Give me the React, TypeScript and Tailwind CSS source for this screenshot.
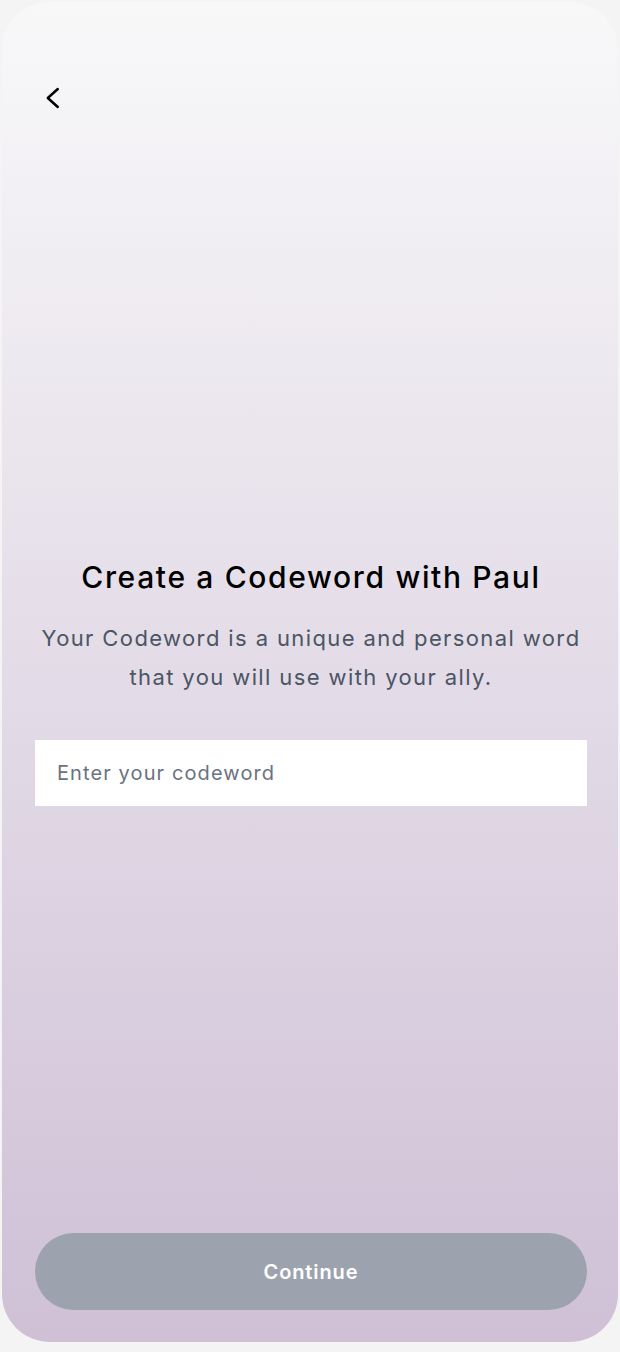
import React from "react";

export default function App() {
  return (
    <div className="min-h-[1352px] w-[620px] bg-[#f4f4f5] p-[2px]" style={{ fontFamily: "Inter, 'Noto Sans', sans-serif" }}>
      <div className="flex h-[1340px] w-[616px] flex-col rounded-[48px] bg-gradient-to-b from-[#f8f8f9] to-[#cfc0d6] pl-[33px] pr-[31px]">
        <div className="pt-[82px]">
          <button className="flex h-[28px] w-[28px] items-center justify-start">
            <svg width="20" height="26" viewBox="0 0 20 26" fill="none" className="ml-[9px]">
              <path d="M14.5 3.5 L4 13 L14.5 22.5" stroke="#000" strokeWidth="2.6" strokeLinecap="round" strokeLinejoin="round" />
            </svg>
          </button>
        </div>
        <div className="mt-[447px] flex flex-col items-center">
          <h1 className="text-[30px] font-medium leading-[36px] tracking-[0.055em] text-black">Create a Codeword with Paul</h1>
          <p className="mt-[24px] text-center text-[22px] leading-[39px] tracking-[0.063em] text-[#4b5563]">
            Your Codeword is a unique and personal word
            <br />
            that you will use with your ally.
          </p>
        </div>
        <input
          type="text"
          placeholder="Enter your codeword"
          className="mt-[43px] h-[66px] w-full bg-white px-[22px] text-[20px] tracking-[0.055em] text-gray-900 outline-none placeholder:text-[#6b7280]"
        />
        <div className="flex-1" />
        <button className="mb-[32px] h-[77px] w-full rounded-full bg-[#9ca3af] text-[20px] font-semibold tracking-[0.045em] text-white">
          Continue
        </button>
      </div>
    </div>
  );
}
